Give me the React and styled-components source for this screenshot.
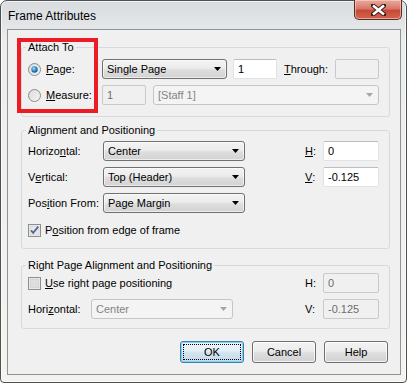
import React from "react";
import styled, { createGlobalStyle, css } from "styled-components";

const GlobalStyle = createGlobalStyle`
  html, body { margin: 0; padding: 0; background: #ffffff; }
  body {
    font-family: "Liberation Sans", Arial, sans-serif;
    font-size: 11px;
    color: #000;
  }
  * { box-sizing: border-box; }
`;

const Window = styled.div`
  position: relative;
  width: 407px;
  height: 383px;
  border: 1px solid #505050;
  border-radius: 7px 7px 4px 4px;
  background: linear-gradient(#d8dcdf 0px, #e2e5e7 22px, #eceeee 40px, #f3f3ef 100%);
  box-shadow: inset 0 0 0 1px rgba(255, 255, 255, 0.7);
  display: flex;
  flex-direction: column;
  padding: 0 5px 7px 6px;
`;

const TitleBar = styled.div`
  height: 28px;
  display: flex;
  justify-content: space-between;
  align-items: flex-start;
`;

const Title = styled.div`
  font-size: 12px;
  line-height: 15px;
  padding: 8px 0 0 1px;
  color: #000;
`;

const CloseButton = styled.div`
  width: 48px;
  height: 20px;
  margin: -1px -1px 0 0;
  border: 1px solid #5a2a24;
  border-top: none;
  border-radius: 0 0 5px 5px;
  background: linear-gradient(#e9aa9e 0%, #d8786a 45%, #c74a36 55%, #d0654f 100%);
  box-shadow: inset 0 0 0 1px rgba(255, 220, 210, 0.55);
  display: flex;
  align-items: center;
  justify-content: center;
`;

const Client = styled.div`
  position: relative;
  flex: 1;
  background: #f0f0f0;
  border: 1px solid #8f9396;
  display: flex;
  flex-direction: column;
`;

const Highlight = styled.div`
  position: absolute;
  left: 9px;
  top: 8px;
  width: 81px;
  height: 75px;
  border: 4px solid #ed1c24;
  pointer-events: none;
`;

const Group = styled.fieldset`
  margin: ${(p) => p.$top}px 10px 0 13px;
  padding: ${(p) => p.$pt}px 10px ${(p) => p.$pb}px 6px;
  border: 1px solid #d5dadd;
  border-radius: 3px;
  min-width: 0;
`;

const Legend = styled.legend`
  padding: 0 2px;
  margin-left: -2px;
  line-height: 13px;
  font-size: 11px;
`;

const Row = styled.div`
  display: flex;
  align-items: center;
  height: 20px;
  margin-top: ${(p) => p.$mt || 0}px;
`;

const RadioLabel = styled.label`
  display: flex;
  align-items: center;
  gap: 5px;
  width: 74px;
  flex: none;
`;

const Text = styled.span`
  white-space: nowrap;
  margin-left: ${(p) => p.$ml || 0}px;
  color: ${(p) => (p.$disabled ? "#6d6d6d" : "#000")};
`;

const comboBase = css`
  height: 20px;
  display: flex;
  align-items: center;
  justify-content: space-between;
  padding: 0 5px 0 4px;
  border-radius: 3px;
  white-space: nowrap;
`;

const Combo = styled.div`
  ${comboBase};
  width: ${(p) => (p.$w ? `${p.$w}px` : "auto")};
  flex: ${(p) => (p.$grow ? 1 : "none")};
  margin-left: ${(p) => p.$ml || 0}px;
  ${(p) =>
    p.$disabled
      ? css`
          border: 1px solid #c3c6c9;
          background: #f4f4f4;
          color: #838383;
        `
      : css`
          border: 1px solid #707070;
          background: linear-gradient(#f3f3f3 0%, #ececec 45%, #dedede 55%, #d2d2d2 100%);
          box-shadow: inset 0 0 0 1px rgba(255, 255, 255, 0.6);
          color: #000;
        `}
`;

const Field = styled.div`
  height: 20px;
  width: ${(p) => p.$w}px;
  flex: none;
  display: flex;
  align-items: center;
  padding-left: 4px;
  border-radius: 2px;
  margin-left: ${(p) => (p.$auto ? "auto" : `${p.$ml || 0}px`)};
  ${(p) =>
    p.$disabled
      ? css`
          background: #f0f0f0;
          border: 1px solid #c7c9cc;
          color: #6d6d6d;
        `
      : css`
          background: #ffffff;
          border: 1px solid #dfe3e8;
          border-top-color: #b9bdc3;
          color: #000;
        `}
`;

const Grid = styled.div`
  display: grid;
  grid-template-columns: ${(p) => p.$label}px 142px 1fr 18px 56px;
  grid-auto-rows: 20px;
  row-gap: 6px;
  align-items: center;
`;

const CheckRow = styled.label`
  grid-column: ${(p) => p.$span};
  grid-row: ${(p) => p.$row};
  display: flex;
  align-items: center;
  gap: 4px;
  margin-top: ${(p) => p.$mt || 0}px;
`;

const Cell = styled.div`
  grid-column: ${(p) => p.$col};
  grid-row: ${(p) => p.$row};
  display: flex;
  align-items: center;
  white-space: nowrap;
`;

const Buttons = styled.div`
  display: flex;
  justify-content: flex-end;
  gap: 8px;
  margin-top: 12px;
  padding-right: 12px;
`;

const Button = styled.div`
  width: 64px;
  height: 22px;
  border-radius: 3px;
  display: flex;
  align-items: center;
  justify-content: center;
  padding: 2px;
  ${(p) =>
    p.$default
      ? css`
          border: 1px solid #3c7fb1;
          background: linear-gradient(#eef5f9 0%, #e3eef5 45%, #d2e3ee 55%, #c4d9e7 100%);
          box-shadow: inset 0 0 0 1px #7fd4f3;
        `
      : css`
          border: 1px solid #707070;
          background: linear-gradient(#f3f3f3 0%, #ececec 45%, #dedede 55%, #d2d2d2 100%);
          box-shadow: inset 0 0 0 1px rgba(255, 255, 255, 0.7);
        `}
`;

const FocusRect = styled.span`
  flex: 1;
  align-self: stretch;
  display: flex;
  align-items: center;
  justify-content: center;
  border: 1px dotted #000;
`;

const Arrow = ({ disabled }) => (
  <svg width="7" height="4" viewBox="0 0 7 4">
    <path d="M0 0H7L3.5 4Z" fill={disabled ? "#a6a6a6" : "#000"} />
  </svg>
);

const Radio = ({ checked }) => (
  <svg width="13" height="13" viewBox="0 0 13 13">
    <defs>
      <linearGradient id={checked ? "rbg1" : "rbg0"} x1="0" y1="0" x2="1" y2="1">
        <stop offset="0" stopColor="#d4d4d4" />
        <stop offset="1" stopColor="#fbfbfb" />
      </linearGradient>
      <radialGradient id="rdot" cx="0.4" cy="0.35" r="0.7">
        <stop offset="0" stopColor="#a4e2ff" />
        <stop offset="0.5" stopColor="#2e8ed1" />
        <stop offset="1" stopColor="#1a4e86" />
      </radialGradient>
    </defs>
    <circle cx="6.5" cy="6.5" r="6" fill={`url(#${checked ? "rbg1" : "rbg0"})`} stroke="#8a8c8e" />
    <circle cx="6.5" cy="6.5" r="4.2" fill="none" stroke="#e8e8e8" strokeWidth="0.8" />
    {checked && <circle cx="6.5" cy="6.5" r="3.2" fill="url(#rdot)" />}
  </svg>
);

const Check = ({ checked }) => (
  <svg width="13" height="13" viewBox="0 0 13 13">
    <rect x="0.5" y="0.5" width="12" height="12" fill="#f5f5f5" stroke="#8e8f8f" />
    <rect x="2" y="2" width="9" height="9" fill={checked ? "#e6e8ec" : "#dedede"} stroke="#c4c4c4" strokeWidth="0.6" />
    {checked && (
      <path d="M3 6.3L5.2 8.8L10.2 2.6" fill="none" stroke="#56688f" strokeWidth="1.8" />
    )}
  </svg>
);

const CloseGlyph = () => (
  <svg width="15" height="12" viewBox="0 0 15 12">
    <path
      d="M2 1.5L13 10.5M13 1.5L2 10.5"
      stroke="#3b1a16"
      strokeWidth="4.4"
      strokeLinecap="square"
    />
    <path d="M2 1.5L13 10.5M13 1.5L2 10.5" stroke="#ffffff" strokeWidth="2.6" />
  </svg>
);

export default function App() {
  return (
    <>
      <GlobalStyle />
      <Window>
        <TitleBar>
          <Title>Frame Attributes</Title>
          <CloseButton>
            <CloseGlyph />
          </CloseButton>
        </TitleBar>
        <Client>
          <Group $top={11} $pt={5} $pb={11}>
            <Legend>Attach To</Legend>
            <Row>
              <RadioLabel>
                <Radio checked />
                <Text>
                  <u>P</u>age:
                </Text>
              </RadioLabel>
              <Combo $w={125}>
                Single Page
                <Arrow />
              </Combo>
              <Field $w={44} $ml={6}>1</Field>
              <Text $ml={7}>
                <u>T</u>hrough:
              </Text>
              <Field $w={44} $auto $disabled />
            </Row>
            <Row $mt={6}>
              <RadioLabel>
                <Radio />
                <Text>
                  <u>M</u>easure:
                </Text>
              </RadioLabel>
              <Field $w={44} $disabled>1</Field>
              <Combo $grow $disabled $ml={7}>
                [Staff 1]
                <Arrow disabled />
              </Combo>
            </Row>
          </Group>

          <Group $top={7} $pt={4} $pb={9}>
            <Legend>Alignment and Positioning</Legend>
            <Grid $label={75}>
              <Cell $col={1} $row={1}>
                Horizo<u>n</u>tal:
              </Cell>
              <Cell $col={2} $row={1}>
                <Combo $grow>
                  Center
                  <Arrow />
                </Combo>
              </Cell>
              <Cell $col={4} $row={1}>
                <u>H</u>:
              </Cell>
              <Cell $col={5} $row={1}>
                <Field $w={56}>0</Field>
              </Cell>
              <Cell $col={1} $row={2}>
                V<u>e</u>rtical:
              </Cell>
              <Cell $col={2} $row={2}>
                <Combo $grow>
                  Top (Header)
                  <Arrow />
                </Combo>
              </Cell>
              <Cell $col={4} $row={2}>
                <u>V</u>:
              </Cell>
              <Cell $col={5} $row={2}>
                <Field $w={56}>-0.125</Field>
              </Cell>
              <Cell $col={1} $row={3}>
                Pos<u>i</u>tion From:
              </Cell>
              <Cell $col={2} $row={3}>
                <Combo $grow>
                  Page Margin
                  <Arrow />
                </Combo>
              </Cell>
              <CheckRow $span="1 / 4" $row={4} $mt={2}>
                <Check checked />
                <Text>
                  P<u>o</u>sition from edge of frame
                </Text>
              </CheckRow>
            </Grid>
          </Group>

          <Group $top={10} $pt={1} $pb={9}>
            <Legend>Right Page Alignment and Positioning</Legend>
            <Grid $label={63}>
              <CheckRow $span="1 / 4" $row={1}>
                <Check />
                <Text>
                  <u>U</u>se right page positioning
                </Text>
              </CheckRow>
              <Cell $col={4} $row={1}>H:</Cell>
              <Cell $col={5} $row={1}>
                <Field $w={56} $disabled>0</Field>
              </Cell>
              <Cell $col={1} $row={2}>
                Hori<u>z</u>ontal:
              </Cell>
              <Cell $col={2} $row={2}>
                <Combo $grow $disabled>
                  Center
                  <Arrow disabled />
                </Combo>
              </Cell>
              <Cell $col={4} $row={2}>V:</Cell>
              <Cell $col={5} $row={2}>
                <Field $w={56} $disabled>-0.125</Field>
              </Cell>
            </Grid>
          </Group>

          <Buttons>
            <Button $default>
              <FocusRect>OK</FocusRect>
            </Button>
            <Button>Cancel</Button>
            <Button>Help</Button>
          </Buttons>
          <Highlight />
        </Client>
      </Window>
    </>
  );
}
